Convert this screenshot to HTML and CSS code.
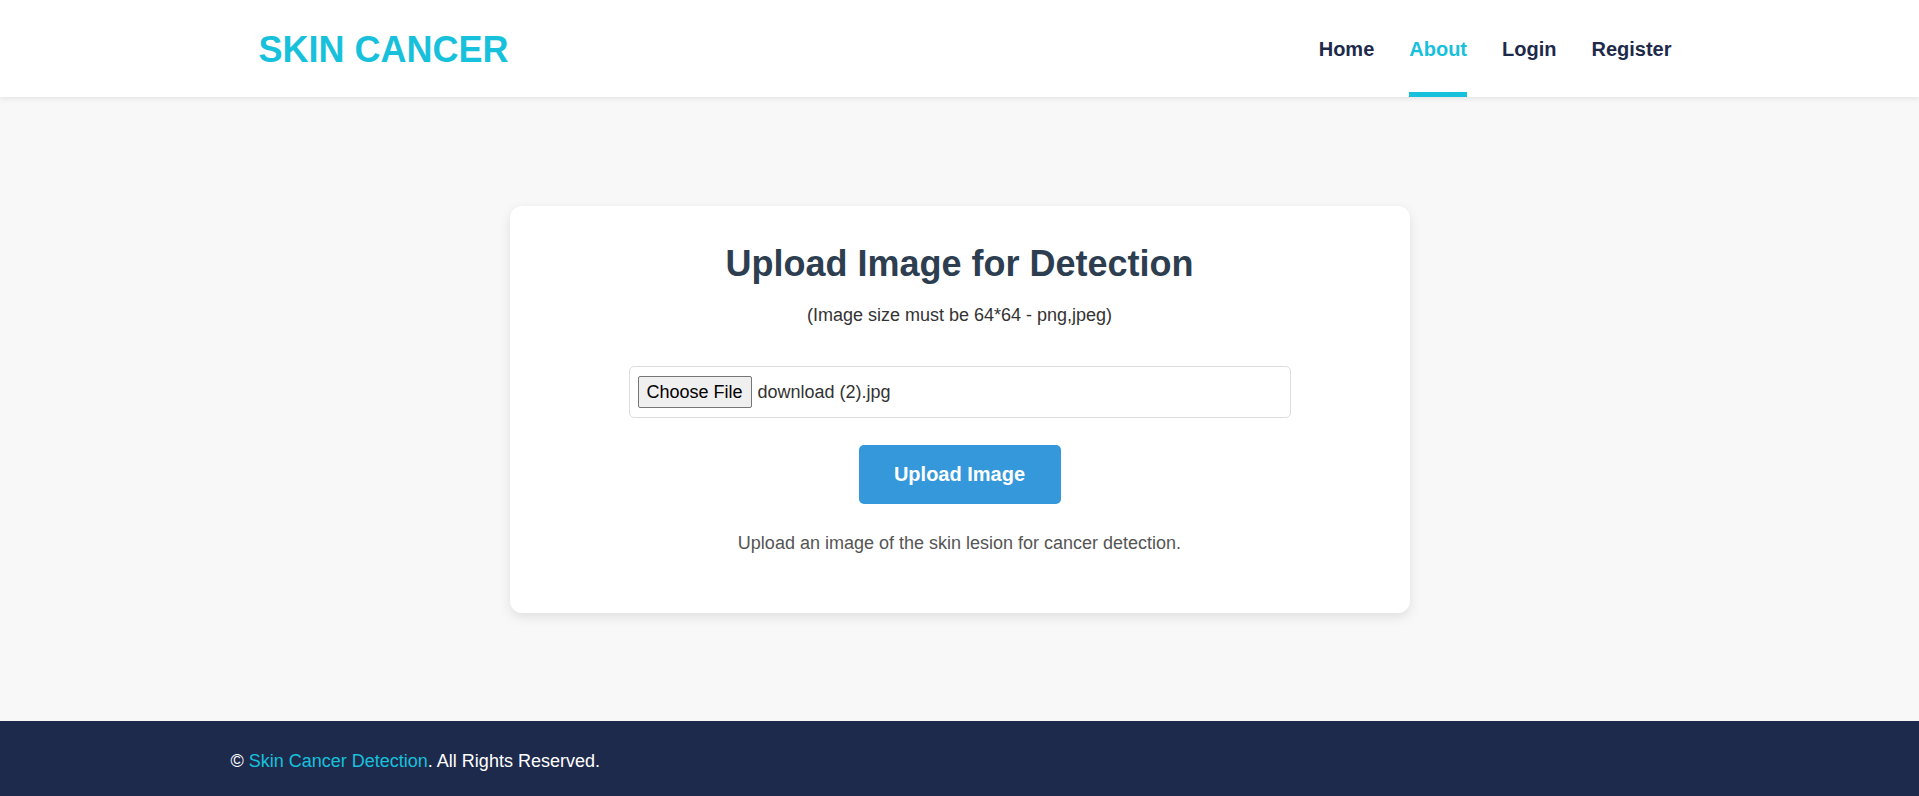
FILE: index.html
```html
<!DOCTYPE html>
<html lang="en">
<head>
<meta charset="utf-8">
<title>Skin Cancer Detection</title>
<link rel="stylesheet" href="styles.css">
</head>
<body>
<header class="site-header">
  <div class="header-inner">
    <a class="logo" href="#">SKIN CANCER</a>
    <nav class="nav-links">
      <a href="#" class="nav-link">Home</a>
      <a href="#" class="nav-link active">About</a>
      <a href="#" class="nav-link">Login</a>
      <a href="#" class="nav-link">Register</a>
    </nav>
  </div>
</header>

<main class="main">
  <section class="card">
    <h2 class="card-title">Upload Image for Detection</h2>
    <p class="card-sub">(Image size must be 64*64 - png,jpeg)</p>
    <form class="upload-form">
      <div class="file-box">
        <span class="file-btn">Choose File</span>
        <span class="file-name">download (2).jpg</span>
      </div>
      <button type="button" class="upload-btn">Upload Image</button>
    </form>
    <p class="card-note">Upload an image of the skin lesion for cancer detection.</p>
  </section>
</main>

<footer class="site-footer">
  <div class="footer-inner">
    © <a href="#" class="footer-link">Skin Cancer Detection</a>. All Rights Reserved.
  </div>
</footer>
</body>
</html>
```
FILE: styles.css
```css
* {
  box-sizing: border-box;
}

html, body {
  margin: 0;
  padding: 0;
}

body {
  font-family: "Liberation Sans", Arial, sans-serif;
  font-size: 18px;
  color: #333;
  background: #f8f8f8;
}

a {
  text-decoration: none;
}

/* Header */
.site-header {
  background: #fff;
  height: 97px;
  box-shadow: 0 2px 5px rgba(0, 0, 0, 0.08);
  position: relative;
  z-index: 2;
}

.header-inner {
  max-width: 1400px;
  height: 100%;
  margin: 0 auto;
  padding-top: 2px;
  display: flex;
  align-items: center;
  justify-content: space-between;
}

.logo {
  font-size: 36px;
  font-weight: 700;
  color: #17c1dc;
  line-height: normal;
  margin-left: -1px;
}

.nav-links {
  display: flex;
  gap: 35px;
  height: 100%;
  margin-right: -12px;
}

.nav-link {
  display: flex;
  align-items: center;
  height: 100%;
  font-size: 20px;
  font-weight: 700;
  color: #1e2a4a;
  border-top: 5px solid transparent;
  border-bottom: 5px solid transparent;
}

.nav-link.active {
  color: #17c1dc;
  border-bottom-color: #17c1dc;
}

/* Main */
.main {
  padding: 109px 0 108px;
}

.card {
  width: 900px;
  margin: 0 auto;
  background: #fff;
  border-radius: 12px;
  box-shadow: 0 4px 12px rgba(0, 0, 0, 0.1);
  padding: 37px 40px 40px;
  text-align: center;
}

.card-title {
  margin: 0 0 20px;
  font-size: 36px;
  font-weight: 700;
  color: #2c3e50;
  line-height: normal;
}

.card-sub {
  margin: 0;
  color: #333;
  line-height: normal;
}

.upload-form {
  display: flex;
  flex-direction: column;
  align-items: center;
  margin-top: 40px;
}

.file-box {
  width: 662px;
  height: 52px;
  border: 1px solid #ddd;
  border-radius: 5px;
  padding: 9px 8px;
  display: flex;
  align-items: center;
  gap: 6px;
  text-align: left;
}

.file-btn {
  display: inline-flex;
  align-items: center;
  height: 32px;
  padding: 0 8px;
  background: #efefef;
  border: 1px solid #767676;
  border-radius: 2px;
  color: #000;
  font-size: 18px;
}

.file-name {
  color: #333;
  font-size: 18px;
}

.upload-btn {
  margin-top: 27px;
  width: 202px;
  height: 59px;
  background: #3498db;
  color: #fff;
  border: none;
  border-radius: 5px;
  font-family: "Liberation Sans", Arial, sans-serif;
  font-size: 20px;
  font-weight: 700;
  cursor: pointer;
}

.card-note {
  margin: 29px 0 19px;
  color: #555;
  line-height: normal;
}

/* Footer */
.site-footer {
  background: #1e2a4c;
  color: #fff;
  padding: 30px 0;
}

.footer-inner {
  max-width: 1458px;
  margin: 0 auto;
  line-height: normal;
}

.footer-link {
  color: #17c1dc;
}
```
